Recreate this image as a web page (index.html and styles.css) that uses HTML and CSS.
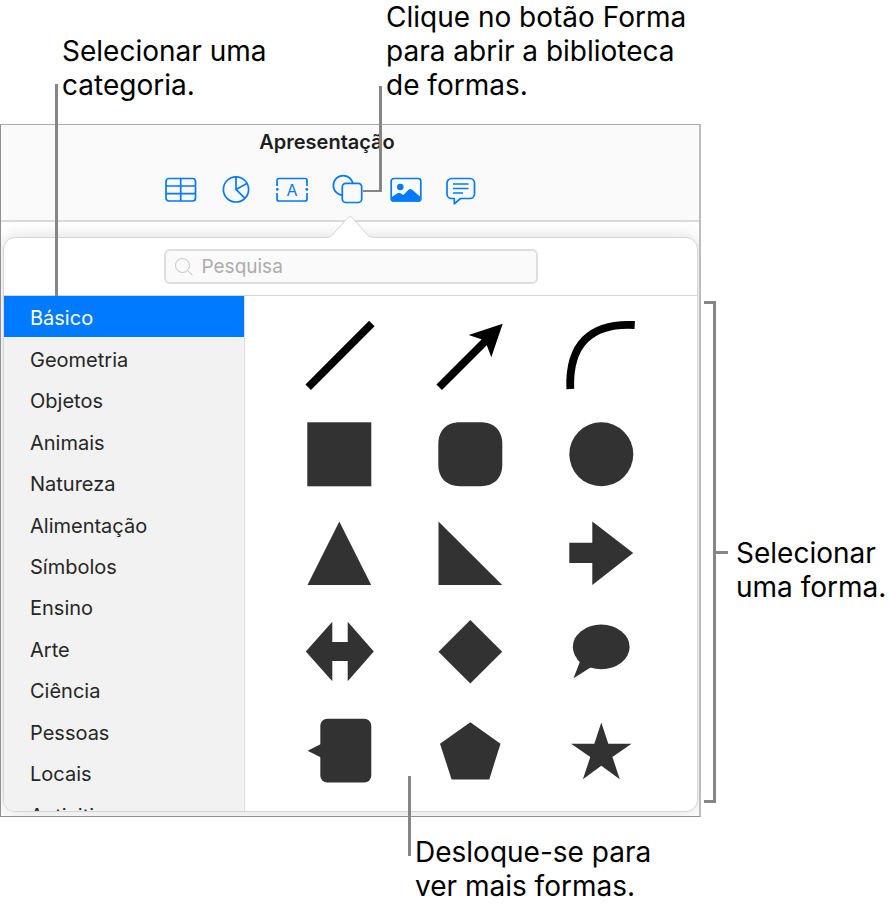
FILE: index.html
```html
<!DOCTYPE html>
<html lang="pt">
<head>
    <meta charset="utf-8">
    <title>Apresentação</title>
    <link rel="stylesheet" href="styles.css">
</head>
<body>
    <div class="figure">
        <div class="top-notes">
            <p class="note note-category">Selecionar uma<br>categoria.</p>
            <p class="note note-shape">Clique no botão Forma<br>para abrir a biblioteca<br>de formas.</p>
        </div>

        <div class="window">
            <header class="header">
                <h1 class="title">Apresentação</h1>
                <div class="toolbar">
                    <button type="button" class="tool" aria-label="Tabela">
                        <svg viewBox="0 0 34 32">
                            <rect x="2" y="4.5" width="29.5" height="22.5" rx="3"/>
                            <path d="M2 12H31.5M2 19.6H31.5M16.7 4.5V27"/>
                        </svg>
                    </button>
                    <button type="button" class="tool" aria-label="Gráfico">
                        <svg viewBox="0 0 34 32">
                            <circle cx="16" cy="15.4" r="12.6"/>
                            <path d="M16 2.8V15.4L27.3 9.3M16 15.4L25 24.4"/>
                        </svg>
                    </button>
                    <button type="button" class="tool" aria-label="Texto">
                        <svg viewBox="0 0 34 32">
                            <path d="M1 12V6.5a2 2 0 0 1 2-2H29a2 2 0 0 1 2 2V12M1 19V25a2 2 0 0 0 2 2H29a2 2 0 0 0 2-2V19"/>
                            <circle class="solid" cx="1.3" cy="15.4" r="1.4"/>
                            <circle class="solid" cx="30.8" cy="15.4" r="1.4"/>
                            <text x="16" y="22" text-anchor="middle">A</text>
                        </svg>
                    </button>
                    <button type="button" class="tool" aria-label="Forma">
                        <svg viewBox="0 0 34 32">
                            <circle cx="11.2" cy="11.4" r="9.8"/>
                            <rect class="front" x="10.3" y="9.3" width="19.4" height="19.2" rx="3.5"/>
                        </svg>
                    </button>
                    <button type="button" class="tool" aria-label="Multimédia">
                        <svg viewBox="0 0 34 32">
                            <rect x="3.2" y="4.5" width="29.6" height="22.5" rx="2.5"/>
                            <circle class="solid" cx="12.3" cy="13" r="3.3"/>
                            <path class="solid" d="M3 23.5L9.6 19.2Q11 18.2 12.4 19.2L15.3 21L20.5 15.8Q22.3 14.2 24.2 15.7L33 23.5V25a2 2 0 0 1-2 2.5H5a2 2 0 0 1-2-2.5Z"/>
                        </svg>
                    </button>
                    <button type="button" class="tool" aria-label="Comentário">
                        <svg viewBox="0 0 34 32">
                            <path d="M7.5 4.5H26a4.5 4.5 0 0 1 4.5 4.5V20A4.5 4.5 0 0 1 26 24.5H16.5L10.3 29.8V24.5H7.5A4.5 4.5 0 0 1 3 20V9A4.5 4.5 0 0 1 7.5 4.5Z"/>
                            <path d="M9 10H24.5M9 14.5H24.5M9 19H19"/>
                        </svg>
                    </button>
                </div>
            </header>

            <div class="popover">
                <svg class="popover-arrow" viewBox="0 0 52 24">
                    <path d="M0 22.5C8 22.5 8 20 12 16L23 3.5Q26 0 29 3.5L40 16C44 20 44 22.5 52 22.5V24H0Z"/>
                    <path class="outline" d="M0 22.5C8 22.5 8 20 12 16L23 3.5Q26 0 29 3.5L40 16C44 20 44 22.5 52 22.5"/>
                </svg>
                <div class="search-bar">
                    <label class="search">
                        <svg viewBox="0 0 18 18">
                            <circle cx="7.5" cy="7.5" r="7"/>
                            <path d="M12.5 12.5L17.5 17.5"/>
                        </svg>
                        <input type="text" placeholder="Pesquisa" aria-label="Pesquisa">
                    </label>
                </div>
                <div class="library">
                    <nav class="sidebar">
                        <ul class="categories">
                            <li><button type="button" class="selected">Básico</button></li>
                            <li><button type="button">Geometria</button></li>
                            <li><button type="button">Objetos</button></li>
                            <li><button type="button">Animais</button></li>
                            <li><button type="button">Natureza</button></li>
                            <li><button type="button">Alimentação</button></li>
                            <li><button type="button">Símbolos</button></li>
                            <li><button type="button">Ensino</button></li>
                            <li><button type="button">Arte</button></li>
                            <li><button type="button">Ciência</button></li>
                            <li><button type="button">Pessoas</button></li>
                            <li><button type="button">Locais</button></li>
                            <li><button type="button">Activities</button></li>
                        </ul>
                    </nav>
                    <div class="shapes">
                        <button type="button" aria-label="Linha">
                            <svg viewBox="0 0 73 73"><path class="stroke" d="M6.2 68.2L69.8 4.5"/></svg>
                        </button>
                        <button type="button" aria-label="Linha com seta">
                            <svg viewBox="0 0 73 73">
                                <path class="stroke" d="M6.2 68.2L52 22.4"/>
                                <path class="black" d="M69.7 4.7L35.7 16L48.3 20.3L53.7 26L58.3 38.3Z"/>
                            </svg>
                        </button>
                        <button type="button" aria-label="Linha curva">
                            <svg viewBox="0 0 73 73"><path class="stroke" d="M6.3 70C4.5 26 26 3.5 70.7 6"/></svg>
                        </button>
                        <button type="button" aria-label="Quadrado">
                            <svg viewBox="0 0 73 73"><rect x="5.3" y="4.3" width="64" height="64"/></svg>
                        </button>
                        <button type="button" aria-label="Quadrado arredondado">
                            <svg viewBox="0 0 73 73"><path d="M27 4.3H47.6C61 4.3 69.3 12.6 69.3 26V46.6C69.3 60 61 68.3 47.6 68.3H27C13.6 68.3 5.3 60 5.3 46.6V26C5.3 12.6 13.6 4.3 27 4.3Z"/></svg>
                        </button>
                        <button type="button" aria-label="Círculo">
                            <svg viewBox="0 0 73 73"><circle cx="37.3" cy="36.3" r="32"/></svg>
                        </button>
                        <button type="button" aria-label="Triângulo">
                            <svg viewBox="0 0 73 73"><path d="M37.3 4.5L69.2 68H5.5Z"/></svg>
                        </button>
                        <button type="button" aria-label="Triângulo retângulo">
                            <svg viewBox="0 0 73 73"><path d="M5.5 4.5L69.2 68H5.5Z"/></svg>
                        </button>
                        <button type="button" aria-label="Seta">
                            <svg viewBox="0 0 73 73"><path d="M5.3 25.7H28.3V4.5L69.2 36L28.3 67.9V46H5.3Z"/></svg>
                        </button>
                        <button type="button" aria-label="Seta dupla">
                            <svg viewBox="0 0 73 73"><path d="M3.8 35.4L30.3 5.8V26H45.7V5.8L71.8 35.4L45.7 65.2V45H30.3V65.2Z"/></svg>
                        </button>
                        <button type="button" aria-label="Losango">
                            <svg viewBox="0 0 73 73"><path d="M37.3 4L69.2 35.7L37.3 67.5L5.5 35.7Z"/></svg>
                        </button>
                        <button type="button" aria-label="Balão de fala">
                            <svg viewBox="0 0 73 73">
                                <ellipse cx="37.2" cy="30.9" rx="28.4" ry="22.3"/>
                                <path d="M13 43L15.8 46L9.5 62.2L27 51.3L32 40Z"/>
                            </svg>
                        </button>
                        <button type="button" aria-label="Chamada">
                            <svg viewBox="0 0 73 73">
                                <rect x="18.3" y="3.7" width="51" height="63.8" rx="7"/>
                                <path d="M5.6 35.7L19 29V42.4Z"/>
                            </svg>
                        </button>
                        <button type="button" aria-label="Pentágono">
                            <svg viewBox="0 0 73 73"><path d="M37.3 7.2L67.5 28.7L56.3 64.4H18.6L7 28.7Z"/></svg>
                        </button>
                        <button type="button" aria-label="Estrela">
                            <svg viewBox="0 0 73 73"><path d="M37.3 7.4L44.3 28.7H67.5L48.4 42L55.8 64.2L37.3 50.7L18.9 64.2L26.3 42L7.1 28.7H30.3Z"/></svg>
                        </button>
                    </div>
                </div>
            </div>
        </div>

        <div class="side-note">
            <span class="bracket"></span>
            <span class="tick"></span>
            <p class="note">Selecionar<br>uma forma.</p>
        </div>

        <p class="note note-scroll">Desloque-se para<br>ver mais formas.</p>
    </div>
</body>
</html>
```
FILE: styles.css
```css
* {
    box-sizing: border-box;
}

body {
    margin: 0;
    background: #fff;
    color: #000;
    font-family: Inter, "Liberation Sans", sans-serif;
}

button {
    margin: 0;
    padding: 0;
    border: none;
    background: none;
    font: inherit;
    cursor: pointer;
}

.figure {
    display: grid;
    grid-template-columns: minmax(0, 1fr) 190px;
}

/* callout texts */
.note {
    position: relative;
    margin: 0;
    font-size: 28px;
    line-height: 34px;
    white-space: nowrap;
}

.top-notes {
    grid-column: 1 / -1;
    display: flex;
    align-items: flex-end;
    padding: 0 0 22px 62px;
}

.note-category {
    flex: 0 0 324px;
}

/* leader lines run from the notes over the window */
.note-category::before,
.note-shape::before,
.note-scroll::before {
    content: "";
    position: absolute;
    z-index: 2;
    background: #868686;
}

.note-category::before {
    left: -7px;
    top: 50px;
    width: 3px;
    height: 212px;
}

.note-shape::before {
    left: -23px;
    top: 86px;
    width: 16px;
    height: 104px;
    background: none;
    border-right: 3px solid #868686;
    border-bottom: 2px solid #868686;
}

.note-scroll {
    margin: 18px 0 0 415px;
}

.note-scroll::before {
    left: -7px;
    top: -59px;
    width: 3px;
    height: 80px;
}

.side-note {
    display: flex;
    align-items: center;
    padding: 177px 0 14px 3px;
}

.side-note .note {
    margin: 36px 0 0 8px;
}

.bracket {
    align-self: stretch;
    width: 12px;
    border: 3px solid #868686;
    border-left: none;
}

.tick {
    width: 12px;
    height: 3px;
    background: #868686;
}

/* window */
.window {
    border: 1px solid #919191;
    border-top-color: #adadad;
    border-right: 2px solid #bdbdbd;
    overflow: hidden;
}

.header {
    height: 97px;
    padding-top: 5px;
    background: #fafafa;
    border-bottom: 2px solid #dadada;
}

.title {
    margin: 0;
    padding-right: 46px;
    font-size: 20px;
    font-weight: 600;
    line-height: 24px;
    text-align: center;
    color: #1d1d1f;
}

.toolbar {
    display: flex;
    gap: 22px;
    padding: 20px 0 0 163px;
}

.tool {
    width: 34px;
    height: 32px;
}

.tool svg {
    display: block;
    fill: none;
    stroke: #007aff;
    stroke-width: 1.7;
    stroke-linejoin: round;
}

.tool .solid,
.tool text {
    fill: #007aff;
    stroke: none;
}

.tool text {
    font-size: 16px;
}

.tool .front {
    fill: #fafafa;
}

/* popover */
.popover {
    position: relative;
    margin: 15px 1px 4px 2px;
    background: #fff;
    border: 1px solid #d6d6d6;
    border-radius: 12px;
    box-shadow: 0 0 18px rgba(0, 0, 0, 0.14);
}

.popover-arrow {
    position: absolute;
    left: 320px;
    top: -23px;
    width: 52px;
    height: 24px;
    fill: #fff;
}

.popover-arrow .outline {
    fill: none;
    stroke: #d6d6d6;
    stroke-width: 1;
}

.search-bar {
    display: flex;
    justify-content: center;
    padding: 11px 0;
    border-bottom: 1px solid #d4d4d4;
}

.search {
    display: flex;
    align-items: center;
    gap: 9px;
    width: 374px;
    height: 35px;
    padding: 0 9px;
    background: #fafafa;
    border: 2px solid #dedede;
    border-radius: 6px;
}

.search svg {
    flex: none;
    width: 18px;
    height: 18px;
    fill: none;
    stroke: #c4c4c4;
}

.search input {
    flex: 1;
    min-width: 0;
    padding: 0;
    border: none;
    outline: none;
    background: none;
    font: inherit;
    font-size: 19px;
}

.search input::placeholder {
    color: #acacac;
}

.library {
    display: flex;
    height: 515px;
}

.sidebar {
    flex: 0 0 241px;
    overflow: hidden;
    background: #f2f2f2;
    border-right: 1px solid #dcdcdc;
    border-bottom-left-radius: 11px;
}

.categories {
    display: grid;
    grid-auto-rows: 1fr;
    height: 539px;
    margin: 0;
    padding: 0;
    list-style: none;
}

.categories button {
    display: block;
    width: 100%;
    height: 100%;
    padding: 3px 26px 0;
    text-align: left;
    font-size: 20px;
    color: #262626;
}

.categories .selected {
    background: #007aff;
    color: #fff;
}

.shapes {
    flex: 1;
    display: grid;
    grid-template-columns: repeat(3, 1fr);
    grid-auto-rows: 99px;
    padding: 10px 31px 0 28px;
}

.shapes svg {
    display: block;
    width: 73px;
    height: 73px;
    margin: 0 auto;
    fill: #323232;
}

.shapes .stroke {
    fill: none;
    stroke: #000;
    stroke-width: 7.8;
}

.shapes .black {
    fill: #000;
}
```
